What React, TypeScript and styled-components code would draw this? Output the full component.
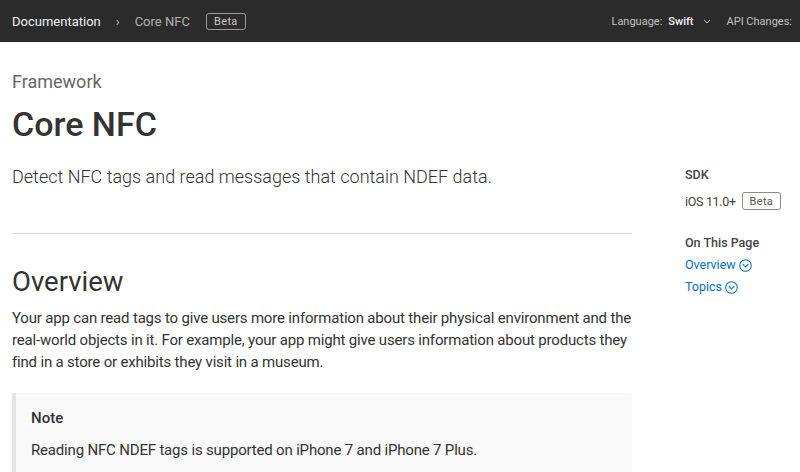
import React from "react";
import styled, { createGlobalStyle } from "styled-components";

const GlobalStyle = createGlobalStyle`
  html, body {
    margin: 0;
    padding: 0;
    background: #fff;
  }
  body {
    font-family: Roboto, "Liberation Sans", sans-serif;
    color: #333;
    -webkit-font-smoothing: antialiased;
    overflow: hidden;
  }
`;

const TopBar = styled.header`
  height: 42px;
  background: #2b2b2b;
  display: flex;
  align-items: center;
  justify-content: space-between;
  padding-left: 12px;
  white-space: nowrap;
  overflow: hidden;
`;

const Crumbs = styled.nav`
  display: flex;
  align-items: center;
  font-size: 13px;
`;

const CrumbRoot = styled.span`
  color: #f2f2f2;
`;

const CrumbSep = styled.span`
  color: #bdbdbd;
  margin: 0 15px;
  font-size: 13px;
`;

const CrumbCurrent = styled.span`
  color: #b3b3b3;
`;

const Pill = styled.span<{ $dark?: boolean }>`
  display: inline-flex;
  align-items: center;
  justify-content: center;
  box-sizing: border-box;
  border: 1px solid ${(p) => (p.$dark ? "#9a9a9a" : "#8a8a8a")};
  border-radius: 3px;
  color: ${(p) => (p.$dark ? "#c8c8c8" : "#555")};
  font-size: 11px;
  letter-spacing: 0.03em;
  height: ${(p) => (p.$dark ? 17 : 18)}px;
  width: ${(p) => (p.$dark ? 40 : 39)}px;
`;

const HeaderPill = styled(Pill)`
  margin-left: 16px;
`;

const Options = styled.div`
  display: flex;
  align-items: center;
  font-size: 11px;
  color: #c2c2c2;
  padding-right: 2px;
`;

const OptLabel = styled.span`
  margin-right: 6px;
`;

const OptValue = styled.span`
  color: #f2f2f2;
  font-weight: 500;
`;

const Chevron = styled.svg`
  margin: 0 16px 0 9px;
`;

const Page = styled.div`
  display: grid;
  grid-template-columns: 620px 1fr;
  column-gap: 53px;
  padding-left: 12px;
`;

const Main = styled.main`
  padding-top: 28px;
`;

const Eyebrow = styled.div`
  font-size: 18px;
  color: #666;
  line-height: 24px;
`;

const Title = styled.h1`
  margin: 9px 0 0;
  font-size: 34px;
  font-weight: 500;
  line-height: 42px;
  color: #333;
`;

const Abstract = styled.p`
  margin: 19px 0 0;
  font-size: 18px;
  font-weight: 300;
  line-height: 26px;
  color: #333;
`;

const Rule = styled.hr`
  border: 0;
  border-top: 1px solid #d6d6d6;
  margin: 43px 0 0;
`;

const SectionTitle = styled.h2`
  margin: 31px 0 0;
  font-size: 27.5px;
  font-weight: 400;
  line-height: 34px;
  color: #333;
`;

const Body = styled.p`
  margin: 8px 0 0;
  font-size: 15px;
  line-height: 22px;
  letter-spacing: -0.012em;
  color: #333;
`;

const Aside = styled.div`
  margin-top: 20px;
  background: #f9f9f9;
  border-left: 4px solid #e4e4e4;
  border-radius: 3px;
  padding: 14px 16px 20px 15px;
`;

const AsideTitle = styled.div`
  font-size: 15px;
  font-weight: 500;
  line-height: 22px;
  color: #333;
`;

const AsideText = styled.p`
  margin: 10px 0 0;
  font-size: 15px;
  line-height: 22px;
  letter-spacing: -0.012em;
  color: #333;
`;

const Sidebar = styled.aside`
  padding-top: 124px;
  font-size: 12.5px;
  white-space: nowrap;
`;

const SideHeading = styled.div<{ $gap?: number }>`
  font-weight: 500;
  color: #444;
  line-height: 18px;
  margin-top: ${(p) => p.$gap ?? 0}px;
`;

const SdkRow = styled.div`
  display: flex;
  align-items: center;
  gap: 6px;
  margin-top: 8px;
  color: #444;
  letter-spacing: -0.025em;
`;

const TocLink = styled.a`
  display: flex;
  align-items: center;
  gap: 3px;
  color: #0070c9;
  text-decoration: none;
  line-height: 18px;
  margin-top: 4px;
`;

const TocIcon = () => (
  <svg width="13" height="13" viewBox="0 0 14 14" fill="none">
    <circle cx="7" cy="7" r="6.2" stroke="#0070c9" strokeWidth="1.1" />
    <path d="M4.3 5.9 L7 8.6 L9.7 5.9" stroke="#0070c9" strokeWidth="1.1" strokeLinecap="round" strokeLinejoin="round" />
  </svg>
);

export default function App() {
  return (
    <>
      <GlobalStyle />
      <TopBar>
        <Crumbs>
          <CrumbRoot>Documentation</CrumbRoot>
          <CrumbSep>›</CrumbSep>
          <CrumbCurrent>Core NFC</CrumbCurrent>
          <HeaderPill $dark>Beta</HeaderPill>
        </Crumbs>
        <Options>
          <OptLabel>Language:</OptLabel>
          <OptValue>Swift</OptValue>
          <Chevron width="8" height="5" viewBox="0 0 8 5" fill="none">
            <path d="M1 1 L4 4 L7 1" stroke="#bbb" strokeWidth="1" />
          </Chevron>
          <OptLabel>API Changes:</OptLabel>
        </Options>
      </TopBar>
      <Page>
        <Main>
          <Eyebrow>Framework</Eyebrow>
          <Title>Core NFC</Title>
          <Abstract>Detect NFC tags and read messages that contain NDEF data.</Abstract>
          <Rule />
          <SectionTitle>Overview</SectionTitle>
          <Body>
            Your app can read tags to give users more information about their physical environment and the
            real-world objects in it. For example, your app might give users information about products they
            find in a store or exhibits they visit in a museum.
          </Body>
          <Aside>
            <AsideTitle>Note</AsideTitle>
            <AsideText>Reading NFC NDEF tags is supported on iPhone 7 and iPhone 7 Plus.</AsideText>
          </Aside>
        </Main>
        <Sidebar>
          <SideHeading>SDK</SideHeading>
          <SdkRow>
            iOS 11.0+
            <Pill>Beta</Pill>
          </SdkRow>
          <SideHeading $gap={24}>On This Page</SideHeading>
          <TocLink href="#overview">
            Overview <TocIcon />
          </TocLink>
          <TocLink href="#topics">
            Topics <TocIcon />
          </TocLink>
        </Sidebar>
      </Page>
    </>
  );
}
